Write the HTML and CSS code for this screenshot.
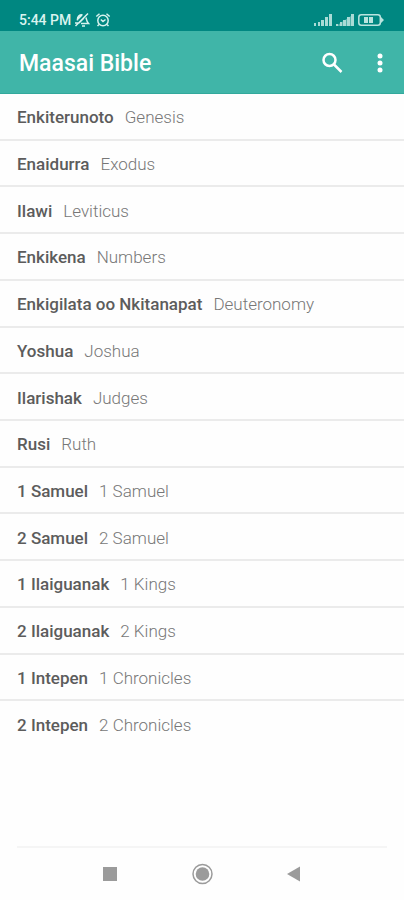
FILE: index.html
```html
<!DOCTYPE html>
<html lang="mas">
<head>
  <meta charset="utf-8">
  <title>Maasai Bible</title>
  <meta name="viewport" content="width=device-width, initial-scale=1.0">
  <link rel="stylesheet" href="styles.css">
</head>

<body>

<div class="status-bar">
  <span>5:44 PM</span>
  <!-- muted bell -->
  <svg class="status-icon" width="16" height="16" viewBox="0 0 16 16">
    <path d="M3.500 8.500C3 4.500 5.500 2.500 8.500 2.800M12 5.500c.5 2 .5 4 2.500 6H7M8 14h3M1.500 14L14 1.500M4 7l4-4M1 11h3M5 11l5-5"/>
  </svg>
  <!-- alarm -->
  <svg class="status-icon alarm" width="16" height="16" viewBox="0 0 16 16">
    <circle cx="8" cy="8.500" r="5.200"/>
    <path d="M1.300 4.500L4.500 1.800M14.700 4.500L11.500 1.800M5.800 7.500L8 9.500L10.500 7.500M4 12.500l-1.500 1.500M12 12.500l1.500 1.500"/>
  </svg>
  <div class="status-right">
    <svg class="signal" width="18" height="12" viewBox="0 0 18 12">
      <path d="M0 9h2v3H0zM4 8h2v4H4zM7 6h3v6H7zM11 3h3v9h-3zM15 0h3v12h-3z"/>
    </svg>
    <svg class="signal" width="18" height="12" viewBox="0 0 18 12">
      <path d="M0 10h2v2H0zM4 8h2v4H4zM7 6h3v6H7zM11 3h3v9h-3zM15 0h3v12h-3z"/>
      <path d="M0 12L18 0v12z" opacity="0.500"/>
    </svg>
    <svg class="battery" width="26" height="12" viewBox="0 0 26 12">
      <rect x="0.800" y="0.800" width="21.500" height="10.400" rx="2.500"/>
      <path class="battery-fill" d="M23 3l3 3-3 3zM6 3h4v6H6zM11 3h4v6h-4z"/>
    </svg>
  </div>
</div>

<header class="app-bar">
  <h1>Maasai Bible</h1>
  <button type="button" class="icon-button" aria-label="Search">
    <svg width="22" height="22" viewBox="0 0 22 22">
      <circle class="lens" cx="8.500" cy="8" r="6"/>
      <path class="lens" d="M13 12.500L20.500 20"/>
    </svg>
  </button>
  <button type="button" class="icon-button" aria-label="More options">
    <svg width="22" height="22" viewBox="0 0 22 22">
      <circle cx="11" cy="4" r="2.500"/>
      <circle cx="11" cy="11" r="2.500"/>
      <circle cx="11" cy="18" r="2.500"/>
    </svg>
  </button>
</header>

<main class="content">
  <ul class="book-list">
    <li><a href="#"><b>Enkiterunoto</b> <span>Genesis</span></a></li>
    <li><a href="#"><b>Enaidurra</b> <span>Exodus</span></a></li>
    <li><a href="#"><b>Ilawi</b> <span>Leviticus</span></a></li>
    <li><a href="#"><b>Enkikena</b> <span>Numbers</span></a></li>
    <li><a href="#"><b>Enkigilata oo Nkitanapat</b> <span>Deuteronomy</span></a></li>
    <li><a href="#"><b>Yoshua</b> <span>Joshua</span></a></li>
    <li><a href="#"><b>Ilarishak</b> <span>Judges</span></a></li>
    <li><a href="#"><b>Rusi</b> <span>Ruth</span></a></li>
    <li><a href="#"><b>1 Samuel</b> <span>1 Samuel</span></a></li>
    <li><a href="#"><b>2 Samuel</b> <span>2 Samuel</span></a></li>
    <li><a href="#"><b>1 Ilaiguanak</b> <span>1 Kings</span></a></li>
    <li><a href="#"><b>2 Ilaiguanak</b> <span>2 Kings</span></a></li>
    <li><a href="#"><b>1 Intepen</b> <span>1 Chronicles</span></a></li>
    <li><a href="#"><b>2 Intepen</b> <span>2 Chronicles</span></a></li>
  </ul>
</main>

<nav class="nav-bar">
  <button type="button" aria-label="Recent apps">
    <svg width="22" height="22" viewBox="0 0 22 22"><path d="M4 4h14v14H4z"/></svg>
  </button>
  <button type="button" aria-label="Home">
    <svg width="22" height="22" viewBox="0 0 22 22">
      <circle class="ring" cx="11.500" cy="11" r="9.500"/>
      <circle cx="11.500" cy="11" r="6.800"/>
    </svg>
  </button>
  <button type="button" aria-label="Back">
    <svg width="22" height="22" viewBox="0 0 22 22"><path d="M4 11L17 3.500v15z"/></svg>
  </button>
</nav>

</body>
</html>
```

FILE: styles.css
```css
* {
  box-sizing: border-box;
}

body {
  display: flex;
  flex-direction: column;
  min-height: 100vh;
  margin: 0;
  background: #fefefe;
  font-family: Roboto, Arial, sans-serif;
}

button {
  padding: 0;
  border: 0;
  background: none;
}

svg {
  display: block;
}

/* Phone status bar */
.status-bar {
  display: flex;
  align-items: center;
  height: 31px;
  padding: 8px 20px 0 19px;
  background: #008781;
  color: #d9f3ef;
  font-size: 14px;
  font-weight: 500;
}

.status-icon {
  margin-left: 3px;
  fill: none;
  stroke: #d9f3ef;
  stroke-width: 1.5;
}

.status-icon.alarm {
  margin-left: 5px;
}

.status-right {
  display: flex;
  gap: 4px;
  margin-left: auto;
}

.signal {
  fill: #a9dbd6;
}

.battery {
  fill: none;
  stroke: #b9e4df;
  stroke-width: 1.5;
}

.battery-fill {
  fill: #b9e4df;
  stroke: none;
}

/* Title bar */
.app-bar {
  display: flex;
  align-items: center;
  height: 63px;
  padding: 2px 8px 0 19px;
  background: #40b5a8;
  border-bottom: 1px solid #32a99c;
  color: #fff;
}

.app-bar h1 {
  margin: 0 auto 0 0;
  font-size: 23px;
  font-weight: 500;
}

.icon-button {
  display: flex;
  align-items: center;
  justify-content: center;
  width: 32px;
  height: 48px;
  margin-left: 16px;
  fill: #fff;
}

.lens {
  fill: none;
  stroke: #fff;
  stroke-width: 2.5;
}

/* Books, all rows share the height */
.content {
  display: flex;
  flex: 1;
  padding-bottom: 98px;
}

.book-list {
  display: grid;
  flex: 1;
  grid-auto-rows: 1fr;
  margin: 0;
  padding: 0;
  list-style: none;
}

.book-list li {
  display: flex;
  border-bottom: 2px solid #ebebeb;
}

.book-list li:last-child {
  border-bottom-color: transparent;
}

.book-list a {
  display: flex;
  flex: 1;
  align-items: center;
  gap: 11px;
  padding: 2px 17px 0;
  color: #777;
  font-size: 17px;
  text-decoration: none;
}

.book-list b {
  color: #5c5c5c;
  font-weight: 500;
}

.book-list span {
  font-weight: 300;
}

/* System buttons */
.nav-bar {
  display: flex;
  align-items: center;
  justify-content: center;
  gap: 70px;
  height: 54px;
  margin: 0 17px;
  border-top: 2px solid #f5f5f5;
}

.nav-bar button {
  fill: #9b9b9b;
}

.ring {
  fill: none;
  stroke: #9b9b9b;
  stroke-width: 1.5;
}
```
